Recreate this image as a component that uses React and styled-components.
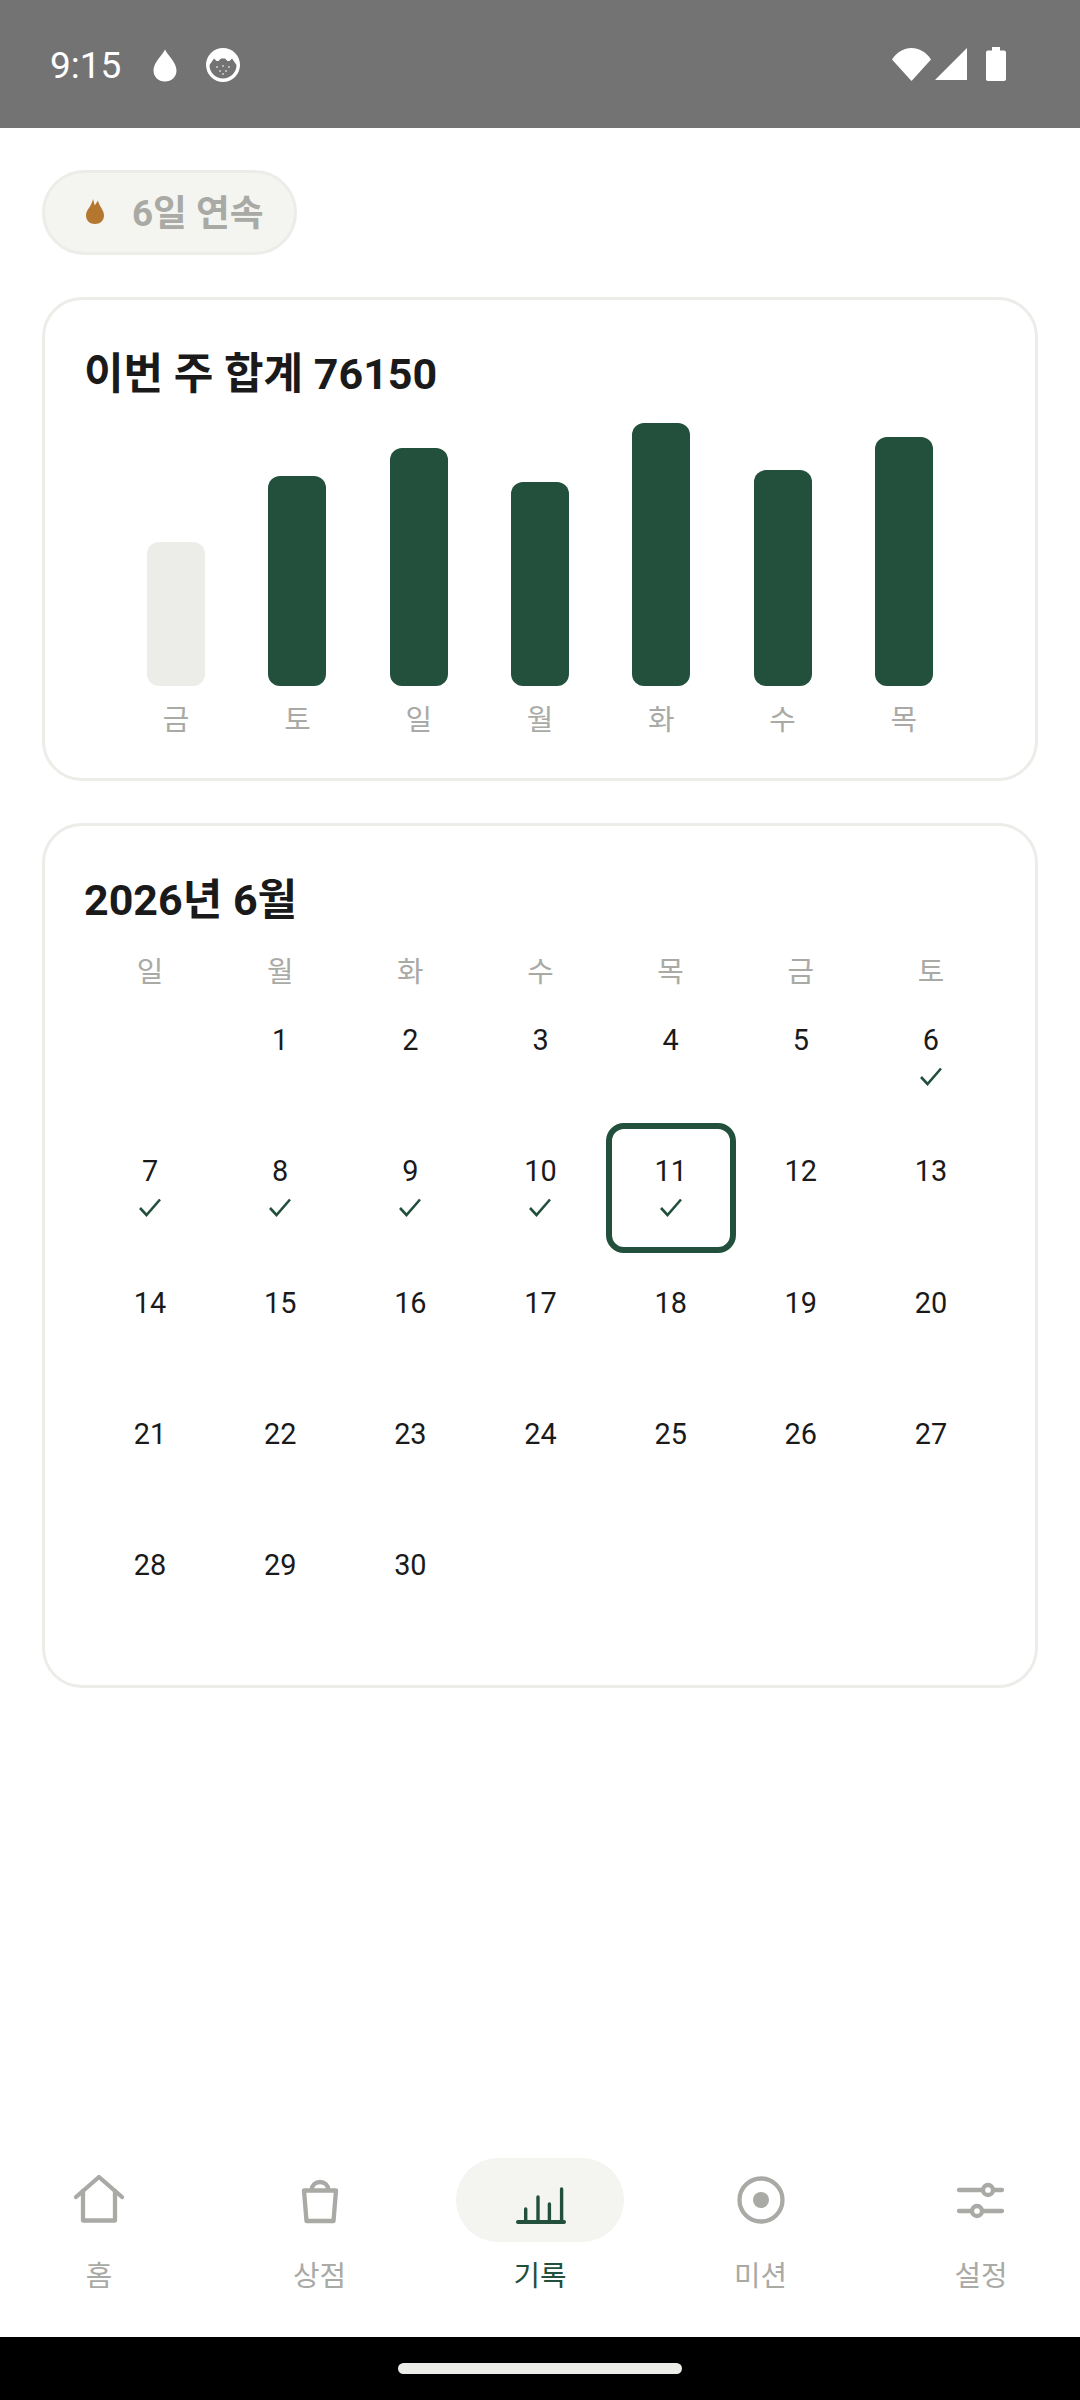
import styled, { createGlobalStyle } from "styled-components";

const GREEN = "#22503c";
const GREY = "#a9aaa5";
const LINE = "#ecece8";

const GlobalStyle = createGlobalStyle`
  html, body {
    margin: 0;
    padding: 0;
    background: #fff;
  }
  body {
    font-family: Roboto, "Noto Sans CJK KR", sans-serif;
    color: #1a1a1a;
  }
`;

const week = [
  { day: "금", height: 144, muted: true },
  { day: "토", height: 210 },
  { day: "일", height: 238 },
  { day: "월", height: 204 },
  { day: "화", height: 263 },
  { day: "수", height: 216 },
  { day: "목", height: 249 },
];

const weekdays = ["일", "월", "화", "수", "목", "금", "토"];
const doneDays = [6, 7, 8, 9, 10, 11];
const today = 11;
const calendarDays = [null, ...Array.from({ length: 30 }, (_, i) => i + 1)];

const DropIcon = () => (
  <svg width="24" height="33" viewBox="0 0 24 33">
    <path
      fill="#fff"
      d="M12 0.5C14.5 6 23.5 13.5 23.5 21.5C23.5 28 18.5 32.5 12 32.5C5.5 32.5 0.5 28 0.5 21.5C0.5 13.5 9.5 6 12 0.5Z"
    />
  </svg>
);

const CatIcon = () => (
  <svg width="34" height="34" viewBox="0 0 34 34">
    <circle cx="17" cy="17" r="17" fill="#fff" />
    <path
      fill="#737373"
      d="M3.5 17L8 10.5L10.5 13H12.5L15 10.5H19L21.5 13H23.5L26 10.5L30.5 17C30.5 25 24 30.5 17 30.5C10 30.5 3.5 25 3.5 17Z"
    />
    <g fill="#fff" opacity="0.7">
      <circle cx="11" cy="19" r="0.9" />
      <circle cx="17" cy="18" r="0.9" />
      <circle cx="23" cy="19" r="0.9" />
      <circle cx="14" cy="23" r="0.9" />
      <circle cx="20" cy="23" r="0.9" />
      <circle cx="17" cy="26" r="0.9" />
    </g>
  </svg>
);

const WifiIcon = () => (
  <svg width="39" height="33" viewBox="0 0 39 33">
    <path fill="#fff" d="M0 11.5C5 4 12 0 19.5 0C27 0 34 4 39 11.5L19.5 33Z" />
  </svg>
);

const SignalIcon = () => (
  <svg width="32" height="32" viewBox="0 0 32 32">
    <path fill="#fff" d="M32 0V32H0Z" />
  </svg>
);

const BatteryIcon = () => (
  <svg width="20" height="34" viewBox="0 0 20 34">
    <path
      fill="#fff"
      d="M6 0H14V3.5H18C19.2 3.5 20 4.3 20 5.5V32C20 33.2 19.2 34 18 34H2C0.8 34 0 33.2 0 32V5.5C0 4.3 0.8 3.5 2 3.5H6Z"
    />
  </svg>
);

const FlameIcon = () => (
  <FlameSvg width="18" height="25" viewBox="0 0 18 25">
    <path
      fill="#b5772f"
      d="M7 0L8.8 6.5L12 1.5C13 7 18 11 18 16.5C18 21.5 14 25 9 25C4 25 0 21.5 0 16.5C0 10.5 5.5 8 7 0Z"
    />
  </FlameSvg>
);

const CheckIcon = () => (
  <svg width="22" height="19" viewBox="0 0 22 19">
    <polyline
      points="1,10 7.5,17 21,1.5"
      fill="none"
      stroke={GREEN}
      strokeWidth="2.6"
    />
  </svg>
);

const NavSvg = ({ children }) => (
  <svg
    width="60"
    height="60"
    viewBox="0 0 60 60"
    fill="none"
    stroke="currentColor"
    strokeWidth="4.3"
    strokeLinecap="round"
    strokeLinejoin="round"
  >
    {children}
  </svg>
);

const HomeIcon = () => (
  <NavSvg>
    <path d="M7 27L30 7L53 27" />
    <path d="M14 21V50.5H46V21" />
  </NavSvg>
);

const ShopIcon = () => (
  <NavSvg>
    <path d="M14 20.5H46L43.5 51H16.5Z" />
    <path d="M21.5 20C22 15 25.5 12 30 12C34.5 12 38 15 38.5 20" />
  </NavSvg>
);

const ChartIcon = () => (
  <NavSvg>
    <path d="M8 52H54" strokeWidth="4" />
    <path d="M15.7 52V39M28 52V27M39.4 52V34M51.6 52V19" strokeWidth="3.4" />
  </NavSvg>
);

const TargetIcon = () => (
  <NavSvg>
    <circle cx="30" cy="30" r="21.5" />
    <circle cx="30" cy="30" r="8" fill="currentColor" stroke="none" />
  </NavSvg>
);

const SlidersIcon = () => (
  <NavSvg>
    <path d="M8 20H51M8 41H51" />
    <circle cx="37" cy="20" r="5" fill="#fff" />
    <circle cx="26" cy="41" r="5" fill="#fff" />
  </NavSvg>
);

const navItems = [
  { label: "홈", Icon: HomeIcon },
  { label: "상점", Icon: ShopIcon },
  { label: "기록", Icon: ChartIcon, active: true },
  { label: "미션", Icon: TargetIcon },
  { label: "설정", Icon: SlidersIcon },
];

const App = () => {
  return (
    <Screen>
      <GlobalStyle />
      <StatusBar>
        <StatusLeft>
          <Clock>9:15</Clock>
          <DropSlot>
            <DropIcon />
          </DropSlot>
          <CatSlot>
            <CatIcon />
          </CatSlot>
        </StatusLeft>
        <StatusRight>
          <WifiIcon />
          <SignalIcon />
          <BatterySlot>
            <BatteryIcon />
          </BatterySlot>
        </StatusRight>
      </StatusBar>

      <Main>
        <Streak>
          <FlameIcon />
          <StreakText>6일 연속</StreakText>
        </Streak>

        <Card>
          <CardTitle>이번 주 합계 76150</CardTitle>
          <Chart>
            {week.map((item) => (
              <ChartColumn key={item.day}>
                <Bar $height={item.height} $muted={item.muted} />
                <BarLabel>{item.day}</BarLabel>
              </ChartColumn>
            ))}
          </Chart>
        </Card>

        <CalendarCard>
          <CardTitle>2026년 6월</CardTitle>
          <WeekHeader>
            {weekdays.map((day) => (
              <WeekDay key={day}>{day}</WeekDay>
            ))}
          </WeekHeader>
          <CalendarGrid>
            {calendarDays.map((day, index) => (
              <DayCell key={index} $today={day === today}>
                {day}
                {doneDays.includes(day) && (
                  <CheckSlot>
                    <CheckIcon />
                  </CheckSlot>
                )}
              </DayCell>
            ))}
          </CalendarGrid>
        </CalendarCard>
      </Main>

      <BottomNav>
        {navItems.map(({ label, Icon, active }) => (
          <NavItem key={label} $active={active}>
            <NavPill $active={active}>
              <Icon />
            </NavPill>
            <NavLabel>{label}</NavLabel>
          </NavItem>
        ))}
      </BottomNav>

      <GestureBar>
        <GestureHandle />
      </GestureBar>
    </Screen>
  );
};

export default App;

const Screen = styled.div`
  display: flex;
  flex-direction: column;
  width: 1080px;
  height: 2400px;
  overflow: hidden;
  background: #fff;
`;

const StatusBar = styled.div`
  display: flex;
  justify-content: space-between;
  align-items: center;
  flex: none;
  height: 128px;
  padding: 0 74px 0 50px;
  box-sizing: border-box;
  background: #737373;
  color: #fff;
`;

const StatusLeft = styled.div`
  display: flex;
  align-items: center;
`;

const StatusRight = styled.div`
  display: flex;
  align-items: center;
  gap: 4px;
`;

const Clock = styled.div`
  width: 103px;
  margin-top: 4px;
  font-size: 37px;
  line-height: 40px;
`;

const DropSlot = styled.div`
  display: flex;
  margin: 2px 30px 0 0;
`;

const CatSlot = styled.div`
  display: flex;
  margin: 2px 0 0 -1px;
`;

const BatterySlot = styled.div`
  display: flex;
  margin-left: 15px;
`;

const Main = styled.main`
  display: flex;
  flex: 1;
  flex-direction: column;
  align-items: stretch;
  gap: 42px;
  padding: 42px 42px 0;
`;

const Streak = styled.div`
  display: flex;
  align-items: center;
  align-self: flex-start;
  gap: 28px;
  box-sizing: border-box;
  height: 85px;
  padding: 0 30px 0 41px;
  background: #f4f4f0;
  border: 3px solid ${LINE};
  border-radius: 43px;
`;

const FlameSvg = styled.svg`
  margin-bottom: 2px;
`;

const StreakText = styled.span`
  padding-bottom: 5px;
  font-size: 36.75px;
  font-weight: 700;
  color: ${GREY};
`;

const Card = styled.section`
  padding: 39px;
  background: #fff;
  border: 3px solid ${LINE};
  border-radius: 40px;
`;

const CalendarCard = styled(Card)`
  padding-bottom: 37px;
`;

const CardTitle = styled.h2`
  margin: 0;
  padding-top: 4px;
  font-size: 43px;
  font-weight: 700;
  line-height: 63px;
`;

const Chart = styled.div`
  display: grid;
  grid-template-columns: repeat(7, 1fr);
  padding: 0 31.5px;
`;

const ChartColumn = styled.div`
  display: flex;
  flex-direction: column;
  align-items: center;
  justify-content: flex-end;
  height: 333px;
`;

const Bar = styled.div`
  width: 58px;
  height: ${(props) => props.$height}px;
  background: ${(props) => (props.$muted ? LINE : GREEN)};
  border-radius: 12px;
`;

const BarLabel = styled.div`
  margin-top: 15px;
  font-size: 28.875px;
  line-height: 38px;
  color: ${GREY};
`;

const WeekHeader = styled.div`
  display: grid;
  grid-template-columns: repeat(7, 1fr);
  margin: 20px 0 0 1px;
`;

const WeekDay = styled.div`
  font-size: 28.875px;
  line-height: 40px;
  text-align: center;
  color: ${GREY};
`;

const CalendarGrid = styled.div`
  display: grid;
  grid-template-columns: repeat(7, 1fr);
  grid-auto-rows: 131.25px;
  margin-left: 1px;
`;

const DayCell = styled.div`
  display: flex;
  flex-direction: column;
  align-items: center;
  box-sizing: border-box;
  height: 130px;
  padding-top: ${(props) => (props.$today ? 24 : 30)}px;
  font-size: 28.875px;
  line-height: 36px;
  border: ${(props) => (props.$today ? `6px solid ${GREEN}` : "none")};
  border-radius: 18px;
`;

const CheckSlot = styled.div`
  display: flex;
  margin-top: 9px;
`;

const BottomNav = styled.nav`
  display: flex;
  justify-content: space-between;
  flex: none;
  padding: 0 42px 42px;
`;

const NavItem = styled.div`
  display: flex;
  flex-direction: column;
  align-items: center;
  width: 114px;
  color: ${(props) => (props.$active ? GREEN : GREY)};
`;

const NavPill = styled.div`
  display: flex;
  flex: none;
  justify-content: center;
  align-items: center;
  width: 168px;
  height: 84px;
  background: ${(props) => (props.$active ? "#f4f4f0" : "transparent")};
  border-radius: 42px;
`;

const NavLabel = styled.div`
  margin-top: 15px;
  font-size: 28.875px;
  line-height: 38px;
`;

const GestureBar = styled.div`
  display: flex;
  justify-content: center;
  align-items: center;
  flex: none;
  height: 63px;
  background: #000;
`;

const GestureHandle = styled.div`
  width: 284px;
  height: 11px;
  background: ${LINE};
  border-radius: 6px;
`;
